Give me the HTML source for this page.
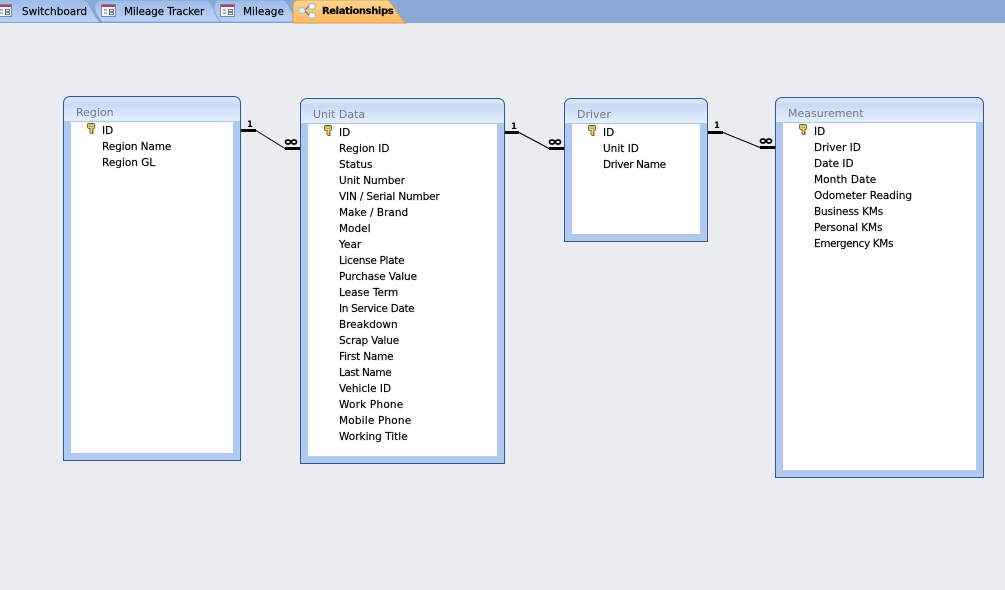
<!DOCTYPE html>
<html><head><meta charset="utf-8">
<style>
html,body{margin:0;padding:0;width:1005px;height:590px;overflow:hidden;background:#e9edf1;font-family:"DejaVu Sans","Liberation Sans",sans-serif}
#bar{position:absolute;left:0;top:0;width:1005px;height:23px;background:#8aa9d6;border-bottom:0}
.tab{position:absolute;white-space:nowrap;font-size:10.5px;color:#000;line-height:14px;top:5px;-webkit-text-stroke:.15px #000}
.box{position:absolute;box-sizing:border-box;border:1px solid #34588c;border-radius:7px 7px 0 0;background:#b0caef;overflow:hidden}
.head{position:absolute;left:0;right:0;top:0;height:24px;background:linear-gradient(#d8e6f8 0,#d3e3f8 5px,#c6daf6 6px,#e3eefc 23px);border-bottom:1px solid #a6c8ee;border-radius:6px 6px 0 0;font-size:11px;color:#6f7a8c;line-height:31px;padding-left:12px;box-sizing:content-box}
.inner{position:absolute;background:#fff}
.r{position:absolute;font-size:10.5px;line-height:16px;color:#000;white-space:nowrap;margin-top:1px;-webkit-text-stroke:.15px #000}
svg{position:absolute;overflow:visible}
</style></head><body>
<div id="bar"></div>

<svg style="left:0;top:0" width="420" height="24" viewBox="0 0 420 24">
<defs>
<linearGradient id="b" x1="0" y1="0" x2="0" y2="1"><stop offset="0" stop-color="#9dbbe8"/><stop offset="1" stop-color="#bcd3f4"/></linearGradient>
<linearGradient id="o" x1="0" y1="0" x2="0" y2="1"><stop offset="0" stop-color="#fcd78f"/><stop offset="1" stop-color="#fdb95f"/></linearGradient>
<g id="ti"><rect x=".5" y=".5" width="14" height="12" fill="#f4f6fa" stroke="#7d8aa5"/><rect x="1" y="1" width="13" height="2" fill="#b0415d"/><path d="M3 6h3M3 9h3" stroke="#6a7a98"/><rect x="8.500" y="5.500" width="4" height="2" fill="none" stroke="#6a7a98"/><rect x="8.500" y="8.500" width="4" height="2" fill="none" stroke="#6a7a98"/></g>
</defs>
<path d="M0 0H84C90 0 92 14 100 22H0Z" fill="url(#b)"/>
<path d="M84 0C90 0 92 14 100 22" fill="none" stroke="#7ea3d6"/>
<path d="M95 10C94 4 96 0 100 0H206C212 0 214 14 222 22H102C98 18 96 14 95 10Z" fill="url(#b)" stroke="#7ea3d6"/>
<path d="M214 10C213 4 215 0 219 0H283C289 0 291 14 299 22H221C217 18 215 14 214 10Z" fill="url(#b)" stroke="#7ea3d6"/>
<path d="M293 23V6C293 2 295 0 299 0H386C392 0 397 16 406 23Z" fill="url(#o)" stroke="#d8a04e"/>
<rect x="0" y="22" width="293" height="1" fill="#7fa3d8"/>
<use href="#ti" x="-3" y="4"/>
<use href="#ti" x="101" y="4"/>
<use href="#ti" x="220" y="4"/>
<rect x="299" y="8" width="6" height="5" fill="#e8edf5" stroke="#9aa4b5" stroke-width=".6"/>
<rect x="309" y="4" width="6" height="5" fill="#fff" stroke="#6f8fc0" stroke-width=".6"/>
<rect x="309" y="13" width="6" height="5" fill="#fff" stroke="#6f8fc0" stroke-width=".6"/>
<path d="M305 10L309 6M305 11L309 15" stroke="#5d7191"/>
</svg>
<div class="tab" style="left:22px">Switchboard</div>
<div class="tab" style="left:124px;letter-spacing:-.13px">Mileage Tracker</div>
<div class="tab" style="left:243px">Mileage</div>
<div class="tab" style="left:322px;font-weight:bold;font-size:10px;letter-spacing:-.4px">Relationships</div>

<div class="box" style="left:63px;top:96px;width:178px;height:365px"><div class="head">Region</div><div class="inner" style="left:7px;top:25px;width:162px;height:331px"></div></div>
<div class="box" style="left:300px;top:98px;width:205px;height:366px"><div class="head">Unit Data</div><div class="inner" style="left:7px;top:25px;width:189px;height:332px"></div></div>
<div class="box" style="left:564px;top:98px;width:144px;height:144px"><div class="head">Driver</div><div class="inner" style="left:7px;top:25px;width:128px;height:110px"></div></div>
<div class="box" style="left:775px;top:97px;width:209px;height:381px"><div class="head">Measurement</div><div class="inner" style="left:7px;top:25px;width:193px;height:347px"></div></div>

<svg style="left:0;top:0" width="1005" height="590" viewBox="0 0 1005 590">
<defs><g id="k"><path d="M.5 1.500Q.5.500 1.500.500H6.500Q7.500.500 7.500 1.500V4Q7.500 5.500 6 5.500V8H5.500V9H6V10.500H4.500L3 9.500V5.500Q.5 5.500 .5 4Z" fill="#f0d878" stroke="#7a6420" stroke-width="1"/><rect x="2.500" y="2" width="3" height="1.500" fill="#fff" stroke="#7a6420" stroke-width=".5"/></g></defs>
<use href="#k" x="87" y="123"/>
<use href="#k" x="324" y="125"/>
<use href="#k" x="588" y="125"/>
<use href="#k" x="799" y="124"/>
<g fill="none" stroke="#000">
<path d="M241 130.500H256M285 148.500H300" stroke-width="3"/>
<path d="M256 130.500L285 148.500"/>
<path d="M505 132.500H519M549 148.500H564" stroke-width="3"/>
<path d="M519 132.500L549 148.500"/>
<path d="M708 132.500H723M760 147.500H775" stroke-width="3"/>
<path d="M723 132.500L760 147.500"/>
<g stroke-width="1.800">
<ellipse cx="288" cy="142" rx="2.500" ry="2"/><ellipse cx="294" cy="142" rx="2.500" ry="2"/>
<ellipse cx="552" cy="142" rx="2.500" ry="2"/><ellipse cx="558" cy="142" rx="2.500" ry="2"/>
<ellipse cx="763" cy="141" rx="2.500" ry="2"/><ellipse cx="769" cy="141" rx="2.500" ry="2"/>
</g>
</g>
<g font-family="'DejaVu Sans',sans-serif" font-size="8.500" font-weight="bold" fill="#000">
<text x="247" y="127">1</text><text x="511" y="129">1</text><text x="714" y="128">1</text>
</g>
</svg>

<div class="r" style="left:102px;top:122px">ID</div>
<div class="r" style="left:102px;top:138px;letter-spacing:-.09px">Region Name</div>
<div class="r" style="left:102px;top:154px">Region GL</div>

<div class="r" style="left:339px;top:124px">ID</div>
<div class="r" style="left:339px;top:140px">Region ID</div>
<div class="r" style="left:339px;top:156px">Status</div>
<div class="r" style="left:339px;top:172px;letter-spacing:-.09px">Unit Number</div>
<div class="r" style="left:339px;top:188px;letter-spacing:-.16px">VIN / Serial Number</div>
<div class="r" style="left:339px;top:204px">Make / Brand</div>
<div class="r" style="left:339px;top:220px">Model</div>
<div class="r" style="left:339px;top:236px">Year</div>
<div class="r" style="left:339px;top:252px;letter-spacing:-.3px">License Plate</div>
<div class="r" style="left:339px;top:268px;letter-spacing:-.14px">Purchase Value</div>
<div class="r" style="left:339px;top:284px">Lease Term</div>
<div class="r" style="left:339px;top:300px;letter-spacing:-.33px">In Service Date</div>
<div class="r" style="left:339px;top:316px">Breakdown</div>
<div class="r" style="left:339px;top:332px;letter-spacing:-.18px">Scrap Value</div>
<div class="r" style="left:339px;top:348px;letter-spacing:-.2px">First Name</div>
<div class="r" style="left:339px;top:364px;letter-spacing:-.44px">Last Name</div>
<div class="r" style="left:339px;top:380px">Vehicle ID</div>
<div class="r" style="left:339px;top:396px;letter-spacing:.2px">Work Phone</div>
<div class="r" style="left:339px;top:412px;letter-spacing:.17px">Mobile Phone</div>
<div class="r" style="left:339px;top:428px">Working Title</div>

<div class="r" style="left:603px;top:124px">ID</div>
<div class="r" style="left:603px;top:140px">Unit ID</div>
<div class="r" style="left:603px;top:156px;letter-spacing:-.36px">Driver Name</div>

<div class="r" style="left:814px;top:123px">ID</div>
<div class="r" style="left:814px;top:139px">Driver ID</div>
<div class="r" style="left:814px;top:155px">Date ID</div>
<div class="r" style="left:814px;top:171px;letter-spacing:.1px">Month Date</div>
<div class="r" style="left:814px;top:187px;letter-spacing:-.06px">Odometer Reading</div>
<div class="r" style="left:814px;top:203px;letter-spacing:-.17px">Business KMs</div>
<div class="r" style="left:814px;top:219px;letter-spacing:-.08px">Personal KMs</div>
<div class="r" style="left:814px;top:235px;letter-spacing:-.38px">Emergency KMs</div>
</body></html>
